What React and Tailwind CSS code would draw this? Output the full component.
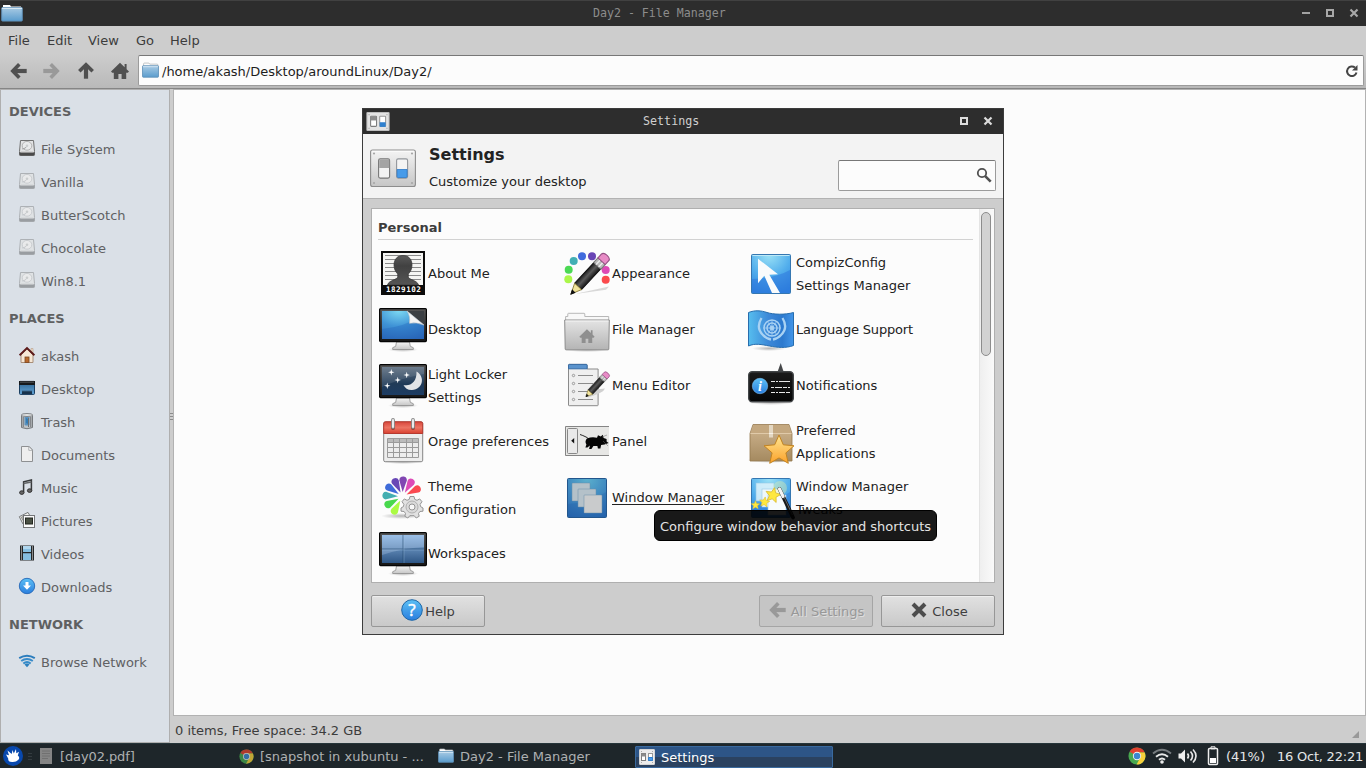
import React from "react";

const Svg = ({ w = 48, h = 48, vw, vh, className = "", children }) => (
  <svg width={w} height={h} viewBox={`0 0 ${vw || w} ${vh || h}`} className={"shrink-0 overflow-visible " + className}>
    {children}
  </svg>
);

const Defs = () => (
  <svg width="0" height="0" className="absolute">
    <defs>
      <linearGradient id="folder" x1="0" y1="0" x2="0" y2="1"><stop offset="0" stopColor="#a9cbe4" /><stop offset="1" stopColor="#5a9ccd" /></linearGradient>
      <linearGradient id="metal" x1="0" y1="0" x2="0" y2="1"><stop offset="0" stopColor="#f4f4f4" /><stop offset="1" stopColor="#c6c6c6" /></linearGradient>
      <linearGradient id="greyFolder" x1="0" y1="0" x2="0" y2="1"><stop offset="0" stopColor="#e4e4e4" /><stop offset="1" stopColor="#b4b4b4" /></linearGradient>
      <linearGradient id="frame" x1="0" y1="0" x2="0" y2="1"><stop offset="0" stopColor="#555" /><stop offset="1" stopColor="#161616" /></linearGradient>
      <radialGradient id="sky" cx="0.4" cy="0" r="1.1"><stop offset="0" stopColor="#7cd8f2" /><stop offset="0.5" stopColor="#3f93d6" /><stop offset="1" stopColor="#2d68b8" /></radialGradient>
      <linearGradient id="night" x1="0" y1="0" x2="0" y2="1"><stop offset="0" stopColor="#5d6e80" /><stop offset="0.6" stopColor="#203a57" /><stop offset="1" stopColor="#1c3c63" /></linearGradient>
      <linearGradient id="spaces" x1="0" y1="0" x2="0" y2="1"><stop offset="0" stopColor="#8bb4e0" /><stop offset="1" stopColor="#2e5685" /></linearGradient>
      <radialGradient id="compiz" cx="0.45" cy="0" r="1"><stop offset="0" stopColor="#9be2f6" /><stop offset="0.55" stopColor="#52aeec" /><stop offset="1" stopColor="#2e84df" /></radialGradient>
      <radialGradient id="wm" cx="0.5" cy="0" r="1.1"><stop offset="0" stopColor="#5cb0cd" /><stop offset="0.5" stopColor="#3e87bf" /><stop offset="1" stopColor="#2765ad" /></radialGradient>
      <linearGradient id="red" x1="0" y1="0" x2="0" y2="1"><stop offset="0" stopColor="#d9473c" /><stop offset="0.5" stopColor="#ec7463" /><stop offset="1" stopColor="#d8402f" /></linearGradient>
      <linearGradient id="flag" x1="0" y1="0" x2="1" y2="0"><stop offset="0" stopColor="#56bdee" /><stop offset="0.45" stopColor="#3d88d8" /><stop offset="0.75" stopColor="#2c79ce" /><stop offset="1" stopColor="#4295e8" /></linearGradient>
      <linearGradient id="black" x1="0" y1="0" x2="0" y2="1"><stop offset="0" stopColor="#1b1b1b" /><stop offset="1" stopColor="#050505" /></linearGradient>
      <linearGradient id="info" x1="0" y1="0" x2="0" y2="1"><stop offset="0" stopColor="#5cc0f5" /><stop offset="1" stopColor="#2a7ede" /></linearGradient>
      <linearGradient id="box" x1="0" y1="0" x2="0" y2="1"><stop offset="0" stopColor="#d0b691" /><stop offset="1" stopColor="#a58a60" /></linearGradient>
      <linearGradient id="star" x1="0" y1="0" x2="0" y2="1"><stop offset="0" stopColor="#ffe693" /><stop offset="1" stopColor="#fba22b" /></linearGradient>
      <linearGradient id="silhouette" x1="0" y1="0" x2="0" y2="1"><stop offset="0" stopColor="#5a5a5a" /><stop offset="0.35" stopColor="#414141" /><stop offset="1" stopColor="#555" /></linearGradient>
      <linearGradient id="deskMini" x1="0" y1="0" x2="0" y2="1"><stop offset="0" stopColor="#2c618d" /><stop offset="1" stopColor="#63a5d8" /></linearGradient>
      <linearGradient id="pencil" x1="0" y1="0" x2="1" y2="0"><stop offset="0" stopColor="#1d1d1d" /><stop offset="0.45" stopColor="#5b5b5b" /><stop offset="1" stopColor="#161616" /></linearGradient>
      <radialGradient id="shade"><stop offset="0" stopColor="#000" stopOpacity="0.28" /><stop offset="1" stopColor="#000" stopOpacity="0" /></radialGradient>
    </defs>
  </svg>
);

/* ---------- small icons ---------- */
const Folder = ({ s = 16 }) => (
  <Svg w={s} h={s} vw={16} vh={16}>
    <path d="M1.5 5V1.8q0-.8.8-.8h4.2l.8 1h6.9q.8 0 .8.8V5z" fill="#fdfdfd" stroke="#aeb2b5" strokeWidth=".7" />
    <rect x=".5" y="3.5" width="15" height="10.8" rx=".6" fill="url(#folder)" stroke="#5f90b8" strokeWidth=".8" />
    <path d="M1 4.4h14" stroke="#d9eaf5" strokeWidth=".8" />
  </Svg>
);
const TitleFolder = () => (
  <Svg w={22} h={18} className="-mt-[1px]">
    <path d="M2 5V1h7l1 1.6h10V5z" fill="#fff" />
    <rect x=".7" y="3.5" width="20.6" height="13.6" rx=".8" fill="url(#folder)" stroke="#5f90b8" strokeWidth=".9" />
    <path d="M1 4.3h20" stroke="#e5f0f7" />
  </Svg>
);
const Toggles = ({ w, h, className = "" }) => (
  <Svg w={w} h={h} vw={46} vh={38} className={className}>
    <rect x=".6" y=".6" width="44.8" height="36.4" rx="2" fill="url(#metal)" stroke="#8d8d8d" strokeWidth="1.1" />
    <path d="M1.6 1.6h42.8" stroke="#fff" />
    {[[4, 4], [42, 4], [4, 33.5], [42, 33.5]].map(([x, y]) => <circle key={x + "," + y} cx={x} cy={y} r="1.1" fill="#a7a7a7" />)}
    <rect x="8.6" y="9.4" width="11" height="19.2" rx="1.6" fill="#f4f4f4" stroke="#777" strokeWidth="1.1" />
    <path d="M9.2 11q0-1 1-1h8q1 0 1 1v7.5h-10z" fill="#a4a4a4" />
    <rect x="26.6" y="9.4" width="11" height="19.2" rx="1.6" fill="#f4f4f4" stroke="#92969b" strokeWidth="1.1" />
    <path d="M27.1 20h10v7q0 1-1 1h-8q-1 0-1-1z" fill="#479be9" stroke="#2c78c8" strokeWidth=".8" />
  </Svg>
);
const MiniToggles = ({ w, h, className = "" }) => (
  <Svg w={w} h={h} vw={22} vh={18} className={className}>
    <rect x=".5" y=".5" width="21" height="17" rx=".5" fill="#e3e3e3" stroke="#bdbdbd" />
    <path d="M2 2h1v1H2zm17 0h1v1h-1zM2 15h1v1H2zm17 0h1v1h-1z" fill="#a9a9a9" />
    <rect x="4" y="4" width="5.6" height="9.6" rx=".6" fill="#fff" stroke="#7d7d7d" />
    <path d="M4.2 4h5.3v4H4.2z" fill="#8c8c8c" />
    <rect x="12.6" y="4" width="5.6" height="9.6" rx=".6" fill="#fff" stroke="#989898" />
    <path d="M12.6 9.7h5.7v4.4h-5.7z" fill="#2f80cf" />
  </Svg>
);
const TaskToggles = () => (
  <Svg w={16} h={16} className="-ml-[1px]">
    <rect x=".5" y=".5" width="15" height="15" rx=".5" fill="#ececec" stroke="#d5d5d5" />
    <path d="M2 2h1v1H2zm11 0h1v1h-1zM2 13h1v1H2zm11 0h1v1h-1z" fill="#a9a9a9" />
    <rect x="2.5" y="4.5" width="4" height="7" fill="#fff" stroke="#7d7d7d" /><path d="M2.5 4.5h4v3h-4z" fill="#8c8c8c" />
    <rect x="9.5" y="4.5" width="4" height="7" fill="#fff" stroke="#989898" /><path d="M9.5 8.5h4v3h-4z" fill="#4b9be8" stroke="#2f80cf" />
  </Svg>
);
const Arrow = ({ r, c, className = "" }) => (
  <Svg w={18} h={18} className={className}>
    <g transform={`rotate(${r} 9 9)`} stroke={c} fill="none" strokeWidth="3.6">
      <path d="M9.3 2.3 2.8 9l6.5 6.7" /><path d="M3.5 9h13.2" strokeWidth="4.2" />
    </g>
  </Svg>
);
const House = ({ c, s = 18 }) => (
  <Svg w={s} h={s} vw={18} vh={18}>
    <path d="M9 .8 0 9.6l1.2 1.2h1.6V17h4.6v-5h3.2v5h4.6v-6.2h1.6L18 9.6l-2.4-2.4V2h-2v3.2z" fill={c} />
  </Svg>
);
const Disk = ({ dim }) => (
  <Svg w={18} h={18}>
    <path d="M2.5 1.5h13l1 11v3.2q0 .8-.8.8H2.3q-.8 0-.8-.8v-3.2z" fill={dim ? "#dfe2e4" : "#e2e3e4"} stroke={dim ? "#adb1b5" : "#707070"} />
    <path d="M1.5 13.3h15v2.5q0 .8-.8.8H2.3q-.8 0-.8-.8z" fill={dim ? "#999da1" : "#4a4a4a"} />
    <path d="M2.5 13.2h13" stroke={dim ? "#c4c7ca" : "#aaa"} />
    <ellipse cx="9" cy="6.8" rx="4.8" ry="4.4" fill="#e9eaeb" stroke={dim ? "#c6cacd" : "#adadad"} strokeWidth=".9" />
    <path d="M8.5 7.8c-2 2-3.5 2.2-4.4 2" stroke={dim ? "#c3c7ca" : "#9d9d9d"} fill="none" />
    <circle cx="9" cy="6.8" r="1.3" fill="#c9cccd" />
  </Svg>
);
const HomeSmall = () => (
  <Svg w={18} h={18}>
    <path d="M3 9v7.5h12V9L9 3z" fill="#f6e7d5" stroke="#a98e78" />
    <path d="M13 2.5h2v5l-2-2z" fill="#efdcc8" stroke="#b59d88" strokeWidth=".6" />
    <rect x="7" y="11" width="4" height="5.5" fill="#b8692d" stroke="#7b4620" strokeWidth=".8" />
    <path d="M1.6 9.2 9 2l7.4 7.2" fill="none" stroke="#5c1a1a" strokeWidth="1.9" />
  </Svg>
);
const DesktopSmall = () => (
  <Svg w={18} h={18}>
    <rect x="1.5" y="2.4" width="15" height="13" rx=".8" fill="url(#deskMini)" stroke="#1b3f61" />
    <path d="M1 2h16v4H1z" fill="#16191c" /><path d="M2 3.2h14" stroke="#505458" />
    <path d="M4 15.2v-3.4h10v3.4z" fill="#17324c" /><path d="M4 12h10" stroke="#4b7aa0" strokeWidth=".6" />
  </Svg>
);
const Trash = () => (
  <Svg w={18} h={18}>
    <path d="M3.5 3h11v12.500Q9 18 3.500 15.500z" fill="#bfc3c6" stroke="#767a7d" />
    <path d="M6.500 5h5v8q-2.500 1-5 0z" fill="#5c92bd" /><path d="M8 6l2.200 1v5L8 11z" fill="#347db5" />
    <path d="M5.200 5v10M12.800 5v10M10.500 6v9" stroke="#6d7073" />
    <ellipse cx="9" cy="3" rx="5.600" ry="1.500" fill="#e0e2e3" stroke="#777b7e" strokeWidth=".9" />
  </Svg>
);
const Doc = () => (
  <Svg w={18} h={18}>
    <path d="M3.500 1.500h7.800l3.200 3.300v11.700h-11z" fill="#eee" stroke="#8e9092" /><path d="M10.800 1.500v3.800h3.700z" fill="#fff" stroke="#9b9d9f" strokeWidth=".8" />
  </Svg>
);
const Music = () => (
  <Svg w={18} h={18}>
    <path d="M5.600 14.500V3.800L13.400 2v10.600" fill="none" stroke="#383a3c" strokeWidth="1.500" /><path d="M5.400 5.600l8-1.700" stroke="#626466" strokeWidth="1.500" />
    <ellipse cx="3.800" cy="14.600" rx="2.200" ry="1.800" fill="#666" stroke="#303030" /><ellipse cx="11.600" cy="12.600" rx="2.200" ry="1.800" fill="#666" stroke="#303030" />
  </Svg>
);
const Pictures = () => (
  <Svg w={18} h={18}>
    <path d="M1.300 5.700 10 1.400l4 7L5 13z" fill="#f1f1ee" stroke="#77797a" /><path d="M3.200 6.300l3.200-1.500 2 5-2 2z" fill="#b9bcaf" stroke="#666" strokeWidth=".6" />
    <rect x="5.500" y="4.500" width="11" height="12" fill="#fafafa" stroke="#737577" /><rect x="7.500" y="7" width="7" height="6" fill="#495043" stroke="#22261f" />
  </Svg>
);
const Video = () => (
  <Svg w={18} h={18}>
    <rect x="2" y="1.500" width="14" height="15" fill="#242729" />
    <path d="M5 2h8v6H5zM5 9.200h8v6.800H5z" fill="#86bfe2" /><path d="M5 2h8v3H5z" fill="#b1d7ee" />
    <path d="M3.500 2.500v13.500M14.500 2.500v13.500" stroke="#eee" strokeWidth="1" strokeDasharray="1 1" />
  </Svg>
);
const Download = () => (
  <Svg w={18} h={18}>
    <circle cx="9" cy="9" r="7.700" fill="url(#info)" stroke="#2467b7" strokeWidth=".9" />
    <path d="M7.500 5h3v3.500h2.500L9 12.800 5 8.500h2.500z" fill="#fff" />
  </Svg>
);
const WifiBlue = () => (
  <Svg w={18} h={18}>
    <g fill="none" stroke="#2c7dbd" strokeWidth="2"><path d="M1.200 6.200Q9 1.300 16.800 6.200" /><path d="M3.200 9q5.800-4.200 11.600 0" stroke="#398bc9" /><path d="M5.300 11.500q3.700-2.800 7.400 0" stroke="#348bc9" /></g>
    <path d="M6.500 12.500q2.500-1.800 5 0L9 15.300z" fill="#2c7fbe" />
  </Svg>
);
const Chrome = ({ s, dim }) => (
  <Svg w={s} h={s} vw={20} vh={20} className={dim ? "opacity-75" : ""}>
    <circle cx="10" cy="10" r="9.500" fill="#48a850" />
    <path d="M10 10 1.800 5.200A9.500 9.500 0 0 1 18.500 6H10z" fill="#e0412f" />
    <path d="M18.500 6a9.500 9.500 0 0 1-9 13.500l4.600-8.800L10 6z" fill="#f8d13b" />
    <circle cx="10" cy="10" r="4.600" fill="#f5f5f5" /><circle cx="10" cy="10" r="3.600" fill="#3b86cf" />
  </Svg>
);

/* ---------- settings icons, 48 x 48 ---------- */
const Monitor = ({ fill, children }) => (
  <Svg>
    <ellipse cx="24" cy="44.500" rx="15" ry="2.600" fill="url(#shade)" />
    <path d="M17.500 37h13l.8 4.300 3 1.400v1.800H13.700v-1.800l3-1.400z" fill="url(#metal)" stroke="#8d8d8d" strokeWidth=".8" />
    <rect x=".6" y="3.600" width="46.800" height="33" rx="1" fill="url(#frame)" stroke="#050505" strokeWidth="1.200" />
    <rect x="3" y="6" width="42" height="28" fill={fill} />
    {children}
  </Svg>
);
const AboutMe = () => (
  <Svg>
    <rect x="2" y="2" width="44" height="44" fill="#0b0b0b" /><rect x="4" y="4" width="40" height="32" fill="#f5f5f3" />
    <path d="M6 6.500h36M6 10.500h36M6 14.500h36M6 18.500h36M6 22.500h36M6 26.500h36M6 30.500h36" stroke="#8a8a8a" strokeWidth="1" />
    <path d="M24 6.500c6 0 9 4.200 9 9.500 0 4-1.500 6.700-3.700 9v2.800c0 3 9 3.200 10.200 8.200h-31c1.200-5 10.200-5.200 10.200-8.200V25C16.500 22.700 15 20 15 16c0-5.300 3-9.500 9-9.500z" fill="url(#silhouette)" stroke="#333" strokeWidth=".7" />
    <text x="24.400" y="43" textAnchor="middle" fontFamily="'DejaVu Sans Mono', monospace" fontWeight="700" fontSize="7.600" textLength="35" fill="#fff">1829102</text>
  </Svg>
);
const Pencil = () => (
  <g>
    <path d="M-3.600-34h7.200v25h-7.200z" fill="url(#pencil)" stroke="#111" strokeWidth=".8" />
    <path d="M-3.600-9 0 0 3.600-9z" fill="#f0e39a" stroke="#8a7a37" strokeWidth=".7" /><path d="M-1.300-3.200 0 0l1.300-3.200z" fill="#111" stroke="#111" strokeWidth=".8" />
    <path d="M-3.800-39h7.600v5.500h-7.600z" fill="#b9b9b9" stroke="#777" strokeWidth=".8" /><path d="M-1.400-39v5.500M1.400-39v5.500" stroke="#eee" />
    <path d="M-3.800-39v-4.300q0-2.700 3.800-2.700t3.800 2.700v4.300z" fill="#e88bc6" stroke="#945083" strokeWidth=".9" />
  </g>
);
const Appearance = () => (
  <Svg>
    <path d="M14 44.500 46 37.500l-3 3.200-29 4z" fill="#d8d8d8" />
    {[[5.3, 30.3, "#abf74a"], [5.7, 20.7, "#4bd954"], [10.7, 12, "#42afb4"], [19, 7.3, "#416bdd"], [29, 7.3, "#6945b5"], [42.7, 21, "#de49b5"], [42.7, 30.7, "#fb4a4d"]].map(([x, y, c]) => <circle key={c} cx={x} cy={y} r="4" fill={c} />)}
    <g transform="translate(8 45) rotate(43) scale(1.300 1.150)"><Pencil /></g>
  </Svg>
);
const Compiz = () => (
  <Svg>
    <rect x="4.500" y="5.500" width="39" height="39" rx="1" fill="url(#compiz)" stroke="#3577b1" /><path d="M5 30q24-1 38-9v23H5z" fill="#2d79dd" opacity=".55" />
    <path d="M5.500 6.500h37" stroke="#bde9f7" /><path d="M11 9.700 31 25.300l-8.700.4L33 44h-8l-7.700-17.300-6.300 7.600z" fill="#f9fbfc" />
  </Svg>
);
const Desktop = () => (
  <Monitor fill="url(#sky)">
    <path d="M3 24q22-2 42-14v24H3z" fill="#1d5eb5" opacity=".3" /><path d="M28 6h17v14z" fill="#3b3f43" /><path d="M28 6l17 14q-8-3.200-14.500-1.700Q31.500 11 28 6z" fill="#f3f3f3" stroke="#c6c6c6" strokeWidth=".6" />
  </Monitor>
);
const FileManager = () => (
  <Svg>
    <ellipse cx="24" cy="45" rx="23" ry="2" fill="url(#shade)" />
    <path d="M2.600 16v-4.500h2.200V9q0-.7.7-.7h15.500q.8 0 .8.7v2.500h23.900V16z" fill="#f8f8f8" stroke="#b8b8b8" />
    <path d="M1.700 15h44.600l-.5 29q0 .8-.8.8H3q-.8 0-.8-.8z" fill="url(#greyFolder)" stroke="#8c8c8c" /><path d="M2.500 16h43" stroke="#f5f5f5" />
    <g transform="translate(16.300 23.500) scale(.85)"><path d="M9 .8 0 9.600l1.200 1.200h1.600V17h4.600v-5h3.200v5h4.600v-6.200h1.600L18 9.600l-2.400-2.400V2h-2v3.200z" fill="#8f8f8f" /></g>
  </Svg>
);
const Language = () => (
  <Svg>
    <ellipse cx="22" cy="43.500" rx="17" ry="2.500" fill="url(#shade)" />
    <path d="M1.500 7.500C8 5 14 5.500 20 7.500S38 10 46.500 7.500V40.500c-8 3-16 2-24 .5S8 38 1.500 41z" fill="url(#flag)" stroke="#276dad" />
    <g fill="none" stroke="#a9d2f3"><circle cx="25" cy="23" r="8" strokeWidth="1.500" /><circle cx="25" cy="23" r="5" strokeWidth="1.500" /><path d="M20 16l10 14M30 16 20 30M16 23h18M25 15v16" strokeWidth=".7" /><circle cx="25" cy="23" r="2" fill="#a9d2f3" /><path d="M14.500 13q-6 10 1.500 17 3 3.500 8 4.500M35.500 13q6 10-1.500 17-3 3.500-8 4.500" strokeWidth="2.300" /></g>
  </Svg>
);
const Locker = () => (
  <Monitor fill="url(#night)">
    <path d="M3 6h42v7Q22 17 3 26z" fill="#fff" opacity=".1" />
    <path d="M37.500 10.500c9 5 6.500 18-4.500 18.500-4 .2-7-1.700-8.500-5 7 1.500 13.500-3 13-13.500z" fill="#e2e4e7" />
    {[[12.3, 11.3], [27.7, 14], [18.7, 19], [8.3, 24.7]].map(([x, y]) => <path key={x} transform={`translate(${x} ${y})`} d="M0-3.200.7-.7 3.200 0 .7.700 0 3.200-.7.700-3.200 0-.7-.7z" fill="#fff" />)}
  </Monitor>
);
const MenuEditor = () => (
  <Svg>
    <path d="M5.500 8V4.200q0-.8.8-.8h17q.8 0 .8.800V8h11v36q0 .7-.7.700H6.200q-.7 0-.7-.7z" fill="#efefef" stroke="#8b8b8b" />
    <path d="M5.500 7.800V4.200q0-.8.8-.8h17q.8 0 .8.800v3.600z" fill="#5a93cd" stroke="#376ca5" />
    {[14.5, 22.5, 30.5, 38.5].map((y) => <g key={y}><circle cx="10.500" cy={y} r="1.200" fill="#eee" stroke="#999" /><path d={`M15 ${y}h15`} stroke="#8b8b8b" /></g>)}
    <path d="M25 36.500q16-5 17-9l-10 1z" fill="#d0d0d0" /><g transform="translate(23 35.700) rotate(43) scale(.88 .7)"><Pencil /></g>
  </Svg>
);
const Notifications = () => (
  <Svg>
    <ellipse cx="24" cy="41.500" rx="23" ry="2.500" fill="url(#shade)" /><path d="M30.500 11l3.200-9 3 9z" fill="#454749" />
    <rect x="1.700" y="10.700" width="44.600" height="30" rx="3.500" fill="url(#black)" stroke="#424547" strokeWidth="1.400" />
    <circle cx="13" cy="25" r="7.700" fill="url(#info)" stroke="#79bcf0" strokeWidth=".6" />
    <text x="13" y="29.800" textAnchor="middle" fontFamily="'Liberation Serif', serif" fontStyle="italic" fontWeight="700" fontSize="14" fill="#fff">i</text>
    <g stroke="#e7e7e7" strokeWidth="1.200"><path d="M24 20.500H43" strokeDasharray="4 1 2 1 11" /><path d="M24 26.500H43" strokeDasharray="3 1 7 1 4 1" /><path d="M24 31.500H43" strokeDasharray="4 1 2 1 6 1" /></g>
  </Svg>
);
const Orage = () => (
  <Svg>
    <ellipse cx="24" cy="45" rx="20" ry="2" fill="url(#shade)" /><rect x="4.700" y="5" width="39" height="39.700" rx="1.500" fill="#ededed" stroke="#858585" />
    <path d="M4.700 16.500V6.500q0-1.700 1.700-1.700H42q1.700 0 1.700 1.700v10z" fill="url(#red)" stroke="#b63a30" />
    <path d="M9 21.500h30.500v4H9z" fill="#bbb" /><path d="M8.500 21.500h31V40.500h-31zM8.500 25.500h31M8.500 30.500h31M8.500 35.500h31M14.500 21.500v19M20.500 21.500v19M27.500 21.500v19M33.500 21.500v19" fill="none" stroke="#9b9b9b" />
    {[14, 34].map((x) => <g key={x}><circle cx={x} cy="11" r="2" fill="#9d3b31" /><path d={`M${x} 3v7`} stroke="#888" strokeWidth="3.800" strokeLinecap="round" /><path d={`M${x} 3v7`} stroke="#ebebeb" strokeWidth="2" strokeLinecap="round" /></g>)}
  </Svg>
);
const Panel = () => (
  <Svg>
    <path d="M46 9.500H2.500v29H46z" fill="#e7e7e5" /><path d="M46 9.500H2.500v29H46" fill="none" stroke="#858585" />
    <rect x="4.500" y="11.500" width="10" height="25" rx="1" fill="#e9e9e9" stroke="#888" /><path d="M11.200 21v5.500L8.200 23.700z" fill="#111" />
    <path d="M17 17.500q3 1 5 2 3 1 4 3" fill="none" stroke="#111" strokeWidth=".9" />
    <path d="M24 21.500q5-2 10-.7l1-2.500 2.800 1.200 2-1.700.8 3.200 3 1v2.500l2 1.500-4 1.500-3.500.5-.7 3.500h-2.500l-.5-2.500-4 0-2 3h-2.300l.8-3.500-2.500 2h-2l1-3q-2-3.200.5-6z" fill="#050505" /><path d="M39 20l5-2M40 24l5 5" stroke="#666" strokeWidth=".5" />
  </Svg>
);
const starPath = "M0-15 4.300-5.200 15-4.200 6.900 2.900 9.300 13.300 0 7.900-9.300 13.300-6.900 2.900-15-4.200-4.300-5.200z";
const Preferred = () => (
  <Svg>
    <ellipse cx="24" cy="43" rx="24" ry="3" fill="url(#shade)" /><path d="M6 7.500h36l3 9v27.500H3V16.500z" fill="url(#box)" stroke="#95794f" strokeWidth=".8" /><path d="M6.300 8h35.400l2.700 8.500H3.600z" fill="#c4a880" />
    <path d="M3.500 16.500h41" stroke="#e0caa9" /><path d="M22 8h4v12.500h-4z" fill="#e3d7c2" /><path d="M22 16.500h4" stroke="#f7f2e8" />
    <path transform="translate(32 33)" d={starPath} fill="url(#star)" stroke="#c28422" strokeLinejoin="round" />
  </Svg>
);
const Theme = () => (
  <Svg>
    <ellipse cx="22" cy="43" rx="20" ry="3" fill="url(#shade)" />
    {[["#abfb43", -151], ["#48d84d", -119], ["#43aeb1", -87], ["#3e6bd9", -56], ["#6847b6", -26], ["#8146b2", 2], ["#dd4bb7", 31], ["#fb4a51", 63]].map(([c, a]) => <path key={c} transform={`translate(23.500 23.500) rotate(${a})`} d="M0-4.500-3.700-16C-4.600-21.500 4.600-21.500 3.700-16z" fill={c} />)}
    <g transform="translate(33 34)" fill="#e1e1e1" stroke="#8b8b8b" strokeWidth=".9">
      <path d="M-2-10.500h4l.8 2.900 2.200.9L7.700-8.100 10-5.300 8.100-2.600l.5 2.200L11 1v3.200L7.900 4.500 6.500 6.500l.7 2.800-3 1.700-2-2.300h-4.400l-2 2.300-3-1.700.7-2.800-1.400-2L-11 4.200V1l2.400-1.400.5-2.200L-10-5.300l2.300-2.800L-5-6.700l2.200-.9z" />
      <circle r="6" fill="#dadada" stroke="#aaa" /><circle r="3" fill="#f8f8f8" />
    </g>
  </Svg>
);
const WindowManager = () => (
  <Svg>
    <rect x="4.500" y="5.500" width="39" height="39" rx="1" fill="url(#wm)" stroke="#22568d" /><path d="M5 31q23-2 38-12v25H5z" fill="#1d58a3" opacity=".25" />
    {[[9, 10], [15, 16], [21, 22]].map(([x, y]) => <rect key={x} x={x} y={y} width="18" height="18" rx=".6" fill={x === 21 ? "#c9cbcc" : "#b4c1c9"} stroke="#688ca9" strokeWidth=".5" />)}
  </Svg>
);
const Tweaks = () => (
  <Svg>
    <rect x="4.500" y="5.500" width="39" height="39" rx="1" fill="url(#compiz)" stroke="#3577b1" /><path d="M5 31q23-2 38-12v25H5z" fill="#2870d4" opacity=".4" />
    <rect x="9" y="10" width="18" height="18" fill="#dff3fb" opacity=".85" stroke="#9bcae4" strokeWidth=".6" /><rect x="15" y="16" width="18" height="18" fill="#eef8fc" stroke="#9bcae4" strokeWidth=".6" /><rect x="21" y="22" width="18" height="20" fill="#f7fbfd" stroke="#9bcae4" strokeWidth=".6" />
    <circle cx="33" cy="15" r="7" fill="#f3f7a0" opacity=".35" />
    {[[26, 22, 0.5, 12], [17.5, 29, 0.34, 8], [8.5, 32, 0.29, 0]].map(([x, y, s, r]) => <path key={x} transform={`translate(${x} ${y}) rotate(${r}) scale(${s})`} d={starPath} fill="#ffe83e" stroke="#d9b92f" strokeWidth="1.500" />)}
    <path d="M32.500 16 46 44.500" stroke="#18191a" strokeWidth="3.800" strokeLinecap="round" /><path d="M32.500 16l3.600 7.500" stroke="#f4f4f4" strokeWidth="3.200" strokeLinecap="round" /><path d="M37 24 45.500 42" stroke="#777" strokeWidth=".8" />
  </Svg>
);
const Workspaces = () => (
  <Monitor fill="url(#spaces)"><path d="M3 6h42v12Q24 19 3 26z" fill="#d0e3fa" opacity=".25" /><path d="M24 6v28M3 20h42" stroke="#23486f" opacity=".6" /><path d="M25 6v28M3 21h42" stroke="#a8cae9" opacity=".5" strokeWidth=".6" /></Monitor>
);

const items = [
  [AboutMe, "About Me"], [Appearance, "Appearance"], [Compiz, "CompizConfig", "Settings Manager"],
  [Desktop, "Desktop"], [FileManager, "File Manager"], [Language, "Language Support"],
  [Locker, "Light Locker", "Settings"], [MenuEditor, "Menu Editor"], [Notifications, "Notifications"],
  [Orage, "Orage preferences"], [Panel, "Panel"], [Preferred, "Preferred", "Applications"],
  [Theme, "Theme", "Configuration"], [WindowManager, "Window Manager"], [Tweaks, "Window Manager", "Tweaks"],
  [Workspaces, "Workspaces"],
];

const WinBtn = ({ kind }) => (
  <Svg w={10} h={10}>
    {kind === "min" && <path d="M1 5h8" stroke="#d4d4d4" strokeWidth="2" />}
    {kind === "max" && <rect x="2" y="2" width="6" height="6" fill="none" stroke="#dcdcdc" strokeWidth="2" />}
    {kind === "close" && <path d="M1.500 1.500l7 7m0-7-7 7" stroke="#dcdcdc" strokeWidth="2.200" />}
  </Svg>
);

const SideHead = ({ children }) => <div className="flex h-[42px] items-center pl-2 font-bold text-[#5f6061]">{children}</div>;
const SideRow = ({ icon, children }) => (
  <div className="flex h-[33px] items-center gap-[5px] pl-[17px]"><div className="-mt-[3px]">{icon}</div><span className="text-[#606163]">{children}</span></div>
);

const SettingsDialog = () => (
  <div className="absolute left-[362px] top-[108px] flex h-[527px] w-[642px] flex-col border border-[#3c3c3c] bg-[#cdcdcd] text-[#222]">
    <div className="flex h-[25px] shrink-0 items-center bg-[#2d2d2d] pl-[3px] pr-[10px]">
      <MiniToggles w={24} h={19} className="-mt-[1px]" />
      <span className="ml-[253px] flex-1 font-['DejaVu_Sans_Mono',monospace] text-[11.7px] text-[#cfcfcf]">Settings</span>
      <div className="-mt-[2px] flex gap-[14px]"><WinBtn kind="max" /><WinBtn kind="close" /></div>
    </div>
    <div className="flex h-[65px] shrink-0 border-b border-[#b2b2b2] bg-[#f3f3f3] pl-[7px] pr-[7px]">
      <Toggles w={46} h={39} className="mt-[15px]" />
      <div className="ml-[13px] flex-1 pt-[9px]">
        <div className="text-[16px] font-bold leading-[24px]">Settings</div>
        <div className="mt-[5px] leading-[20px]">Customize your desktop</div>
      </div>
      <div className="mt-[26px] flex h-[31px] w-[158px] justify-end rounded-[2px] border border-[#9b9b9b] border-t-[#777] bg-[#fcfcfc] pr-[3px] pt-[6px]">
        <Svg w={16} h={17}><circle cx="6" cy="6" r="4.200" fill="none" stroke="#505050" strokeWidth="1.800" /><path d="M9.200 9.200l5.500 5.500" stroke="#505050" strokeWidth="2.600" /></Svg>
      </div>
    </div>
    <div className="mx-2 mt-[9px] flex h-[375px] shrink-0 border border-[#afafaf] bg-[#fcfcfc]">
      <div className="flex-1 pl-[6px] pr-[6px]">
        <div className="flex h-[31px] items-end border-b border-[#d2d2d2] font-bold text-[#3c3c3c]"><span className="leading-[22px]">Personal</span></div>
        <div className="ml-[1px] mt-[5px] grid grid-cols-[184px_184px_184px] auto-rows-[56px]">
          {items.map(([Icon, a, b], i) => (
            <div key={i} className="flex items-center gap-[1px]">
              <Icon />
              <div className={"whitespace-nowrap leading-[23px]" + (b ? " pt-[1px]" : "") + (i === 5 ? " tracking-[-0.17px]" : "")}><div className={i === 13 ? "underline decoration-1 underline-offset-2" : ""}>{a}</div>{b && <div>{b}</div>}</div>
            </div>
          ))}
        </div>
      </div>
      <div className="w-[15px] border-l border-[#e4e4e4] bg-gradient-to-r from-[#efefef] to-[#fafafa] pl-[1px] pt-[3px]">
        <div className="h-[144px] w-[10px] rounded-full border border-[#8d8d8d] bg-[#d2d2d2]" />
      </div>
    </div>
    <div className="mx-2 mt-3 flex h-8 text-[#3f3f3f]">
      <div className="flex w-[114px] items-center justify-center gap-[2px] rounded-[2px] border border-[#979797] bg-gradient-to-b from-[#e1e1e1] to-[#c9c9c9] shadow-[inset_0_1px_#eee]">
        <Svg w={22} h={22} className="-mt-[2px]"><circle cx="11" cy="11" r="10.300" fill="url(#info)" stroke="#1f68a8" /><text x="11" y="17" textAnchor="middle" fontFamily="'Noto Sans', sans-serif" fontSize="17" fill="#fff" stroke="#fff" strokeWidth=".4">?</text></Svg>
        <span className="pt-[1px]">Help</span>
      </div>
      <div className="ml-auto flex w-[114px] items-center justify-center gap-[4px] whitespace-nowrap rounded-[2px] border border-[#a5a5a5] bg-[#c5c5c5] pl-[1px] text-[#989898] [text-shadow:1px_1px_#dedede]"><Arrow r={0} c="#999" className="-mt-[3px]" /><span className="pt-[1px]">All Settings</span></div>
      <div className="ml-2 flex w-[114px] items-center justify-center gap-[5px] rounded-[2px] border border-[#979797] bg-gradient-to-b from-[#e1e1e1] to-[#c9c9c9] pl-[3px] shadow-[inset_0_1px_#eee]">
        <Svg w={16} h={16} className="-mt-[3px]"><path d="M2 2l12 12m0-12L2 14" stroke="#4d4d4d" strokeWidth="4" /></Svg><span className="pt-[1px]">Close</span>
      </div>
    </div>
    <div className="absolute left-[291px] top-[401px] flex h-[31px] w-[283px] items-center justify-center whitespace-nowrap rounded-[6px] border border-black bg-black/90 pt-[2px] text-[#e3e3e3]">Configure window behavior and shortcuts</div>
  </div>
);

export default function App() {
  return (
    <div className="relative flex h-[768px] w-[1366px] flex-col overflow-hidden bg-[#cdcdcd] font-['DejaVu_Sans',sans-serif] text-[13px] text-[#3c3c3c]">
      <Defs />
      <div className="flex h-[26px] shrink-0 items-center border-t border-[#414141] bg-[#2d2d2d] pl-[1px] pr-[7px]">
        <TitleFolder />
        <span className="ml-[570px] flex-1 whitespace-pre font-['DejaVu_Sans_Mono',monospace] text-[11.6px] text-[#8c8c8c]">Day2 - File Manager</span>
        <div className="-mt-[1px] flex gap-[14px] opacity-70"><WinBtn kind="min" /><WinBtn kind="max" /><WinBtn kind="close" /></div>
      </div>
      <div className="flex h-[28px] shrink-0 items-center pl-2 pt-[2px]"><span className="w-[39px]">File</span><span className="w-[41px]">Edit</span><span className="w-[48px]">View</span><span className="w-[34px]">Go</span><span>Help</span></div>
      <div className="flex h-[35px] shrink-0 items-center border-b border-[#858585] bg-gradient-to-b from-[#cdcdcd] to-[#b9b9b9] pl-[10px] pr-[2px]">
        <Arrow r={0} c="#505050" /><Arrow r={180} c="#999" className="ml-[14px]" /><Arrow r={90} c="#505050" className="ml-[17px]" /><div className="ml-[16px]"><House c="#505050" /></div>
        <div className="ml-[9px] -mt-[1px] flex h-[31px] flex-1 items-center rounded-[2px] border border-[#9b9b9b] border-t-[#777] bg-[#fcfcfc] pl-[3px] pr-[4px] text-[#1d1d1d]">
          <Folder s={17} /><span className="ml-[3px] flex-1 pt-[2px]">/home/akash/Desktop/aroundLinux/Day2/</span>
          <Svg w={14} h={14}><path d="M11.500 8.500A4.800 4.800 0 1 1 10 3.600" fill="none" stroke="#454545" strokeWidth="2" /><path d="M12.500 1v5.500H7z" fill="#454545" /></Svg>
        </div>
      </div>
      <div className="flex min-h-0 flex-1">
        <div className="w-[170px] shrink-0 border border-[#afafaf] bg-[#dae0e7] pt-[1px]">
          <SideHead>DEVICES</SideHead>
          <SideRow icon={<Disk />}>File System</SideRow><SideRow icon={<Disk dim />}>Vanilla</SideRow><SideRow icon={<Disk dim />}>ButterScotch</SideRow><SideRow icon={<Disk dim />}>Chocolate</SideRow><SideRow icon={<Disk dim />}>Win8.1</SideRow>
          <SideHead>PLACES</SideHead>
          <SideRow icon={<HomeSmall />}>akash</SideRow><SideRow icon={<DesktopSmall />}>Desktop</SideRow><SideRow icon={<Trash />}>Trash</SideRow><SideRow icon={<Doc />}>Documents</SideRow><SideRow icon={<Music />}>Music</SideRow><SideRow icon={<Pictures />}>Pictures</SideRow><SideRow icon={<Video />}>Videos</SideRow><SideRow icon={<Download />}>Downloads</SideRow>
          <SideHead>NETWORK</SideHead>
          <SideRow icon={<WifiBlue />}>Browse Network</SideRow>
        </div>
        <div className="flex w-[3px] shrink-0 flex-col justify-center gap-[2px]"><i className="h-px bg-[#8c8c8c]" /><i className="h-px bg-[#8c8c8c]" /><i className="h-px bg-[#8c8c8c]" /></div>
        <div className="flex flex-1 flex-col">
          <div className="flex-1 border border-[#b2b2b2] bg-[#fcfcfc]" />
          <div className="flex h-[27px] items-center justify-between pl-[2px] pr-[7px] pt-[2px]"><span>0 items, Free space: 34.2 GB</span><Svg w={7} h={7} className="mt-[7px]"><path d="M7 0v7H0z" fill="#999" /></Svg></div>
        </div>
      </div>
      <div className="flex h-[25px] shrink-0 items-center border-t border-[#26353a] bg-[#1e262a] text-[#aeb1b2]">
        <Svg w={22} h={22} className="ml-[2px]"><circle cx="11" cy="11" r="10" fill="#0848ad" /><path d="M4 9.500l3 .7L5.500 5.500l4.200 3.500L10.500 5l1.300 3.500L14 4l.3 4.300 2.700-1.500-1.200 3.700q2.500 2.200.6 4.200-2 2.300-5.600 2.300-5 .3-4.600-3.500z" fill="#fff" /></Svg>
        <div className="ml-[4px] flex w-[4px] flex-col gap-[2px]"><i className="h-px bg-[#343c40]" /><i className="h-px bg-[#343c40]" /><i className="h-px bg-[#343c40]" /></div>
        <Svg w={12} h={16} className="ml-[8px]"><path d="M0 0h12v16H0z" fill="#858585" /><path d="M2 3h8M2 5.500h8M2 8h8M2 10.500h6" stroke="#707070" /></Svg>
        <span className="ml-[8px] w-[179px] pt-[1px] tracking-[-0.1px]">[day02.pdf]</span><Chrome s={15} dim /><span className="ml-[6px] w-[178px] whitespace-nowrap pt-[1px]">[snapshot in xubuntu - ...</span>
        <Folder s={16} /><span className="ml-[6px] w-[175px] pt-[1px]">Day2 - File Manager</span>
        <div className="mt-[1px] flex h-[22px] w-[198px] items-center rounded-[1px] border border-[#3a6a9e] bg-gradient-to-b from-[#2d5587] from-50% to-[#2b4260] to-50% pl-[4px] text-white"><TaskToggles /><span className="ml-[6px] pt-[2px]">Settings</span></div>
        <div className="ml-auto flex items-center pr-[3px] text-[#e5e7e8]">
          <Chrome s={18} />
          <Svg w={20} h={16} className="ml-[6px]"><g fill="none" strokeWidth="1.900"><path d="M1 5.500q9-7.500 18 0" stroke="#777d80" /><path d="M4 8.700q6-5 12 0M7 11.700q3-2.500 6 0" stroke="#e8e9e9" /></g><circle cx="10" cy="14" r="1.800" fill="#eee" /></Svg>
          <Svg w={19} h={16} className="ml-[6px]"><path d="M.5 5.500h2.500L7 1.500v13L3 10.500H.5z" fill="#eee" /><path d="M9.500 5.500q2 2.500 0 5M12.500 3.500q4 4.500 0 9M15 1.500q6 6.500 0 13" fill="none" stroke="#e8e8e8" strokeWidth="1.600" /></Svg>
          <Svg w={12} h={20} className="ml-[10px]"><path d="M4 .8h4v2H4z" fill="none" stroke="#eee" /><rect x="1.500" y="2.500" width="9" height="16" rx="1" fill="none" stroke="#eee" strokeWidth="1.500" /><path d="M3 12h6v5H3z" fill="#fff" /></Svg>
          <span className="ml-[7px] w-[51px] pt-[1px]">(41%)</span><span className="whitespace-nowrap pt-[1px] tracking-[-0.22px]">16 Oct, 22:21</span>
        </div>
      </div>
      <SettingsDialog />
    </div>
  );
}
